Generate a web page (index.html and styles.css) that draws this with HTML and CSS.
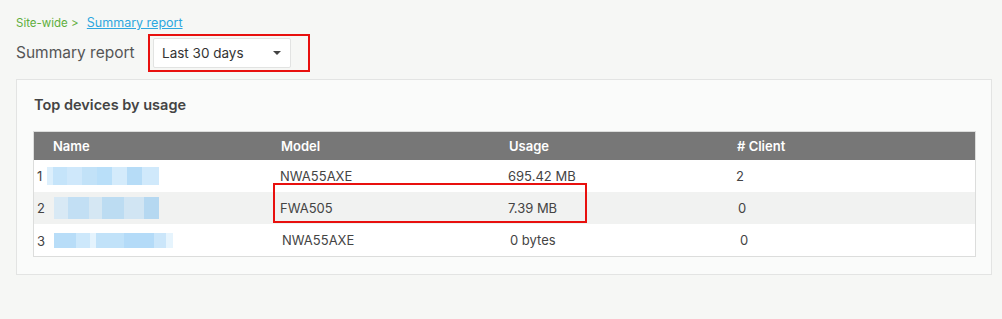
FILE: index.html
```html
<!DOCTYPE html>
<html lang="en">
<head>
    <meta charset="UTF-8">
    <title>Summary report</title>
    <link rel="stylesheet" href="styles.css">
</head>
<body>
    <div class="breadcrumb">
        <span class="crumb-site">Site-wide &gt;</span>
        <a href="#" class="crumb-link">Summary report</a>
    </div>

    <div class="page-head">
        <h2>Summary report</h2>
        <div class="highlight range-box">
            <div class="range-select">
                <span>Last 30 days</span>
                <span class="caret"></span>
            </div>
        </div>
    </div>

    <div class="card">
        <h3>Top devices by usage</h3>
        <div class="table-wrap">
            <table>
                <thead>
                    <tr>
                        <th class="col">Name</th>
                        <th class="col">Model</th>
                        <th class="col">Usage</th>
                        <th># Client</th>
                    </tr>
                </thead>
                <tbody>
                    <tr>
                        <td class="name-cell"><span class="idx">1</span><span class="blur blur-1"></span></td>
                        <td>NWA55AXE</td>
                        <td>695.42 MB</td>
                        <td>2</td>
                    </tr>
                    <tr class="alt">
                        <td class="name-cell"><span class="idx">2</span><span class="blur blur-2"></span></td>
                        <td>FWA505</td>
                        <td>7.39 MB</td>
                        <td class="shift-1">0</td>
                    </tr>
                    <tr>
                        <td class="name-cell"><span class="idx">3</span><span class="blur blur-3"></span></td>
                        <td class="shift-1">NWA55AXE</td>
                        <td class="shift-1">0 bytes</td>
                        <td class="shift-2">0</td>
                    </tr>
                </tbody>
            </table>
            <div class="highlight row-box"></div>
        </div>
    </div>
</body>
</html>
```

FILE: styles.css
```css
body {
    margin: 0;
    padding: 14px 16px 0;
    background-color: #f6f7f5;
    font-family: Inter, "Noto Sans", sans-serif;
    color: #444;
}
.breadcrumb {
    font-size: 11.5px;
    height: 18px;
    line-height: 18px;
}
.crumb-site {
    color: #5eae3c;
}
.crumb-link {
    color: #2ea7e0;
    margin-left: 5px;
    font-size: 12.5px;
}
.page-head {
    display: flex;
    align-items: center;
    height: 41px;
}
.page-head h2 {
    margin: 0;
    font-size: 15.5px;
    font-weight: normal;
    color: #555;
    width: 132px;
}
.highlight {
    border: 2px solid #e8100e;
}
.range-box {
    padding: 2px 17px 2px 3px;
}
.range-select {
    display: flex;
    align-items: center;
    justify-content: space-between;
    width: 120px;
    height: 28px;
    padding: 0 8px;
    background: #fff;
    border: 1px solid #e2e3e2;
    border-radius: 2px;
    font-size: 13.5px;
    color: #333;
}
.caret {
    width: 0;
    height: 0;
    margin-right: 1px;
    border-left: 4px solid transparent;
    border-right: 4px solid transparent;
    border-top: 4px solid #444;
}
.card {
    margin-top: 6px;
    width: 942px;
    height: 161px;
    padding: 16px 16px 17px 16px;
    background: #fafbfa;
    border: 1px solid #e3e4e3;
}
.card h3 {
    margin: 0 0 17px 1px;
    font-size: 14.5px;
    font-weight: 600;
    color: #444;
    line-height: 18px;
}
.table-wrap {
    position: relative;
}
table {
    width: 943px;
    table-layout: fixed;
    border-collapse: collapse;
    border: 1px solid #dcdddc;
    background: #fff;
    font-size: 13px;
}
th {
    background: #777;
    color: #fff;
    text-align: left;
    font-weight: 600;
    height: 28px;
    padding: 0 0 0 19px;
}
th.col {
    width: 209px;
}
td {
    height: 32px;
    padding: 0 0 0 18px;
    color: #444;
}
td.name-cell {
    padding-left: 3px;
}
tr.alt td {
    background: #f1f2f1;
}
td.shift-1 {
    padding-left: 20px;
}
td.shift-2 {
    padding-left: 22px;
}
.idx {
    display: inline-block;
    width: 10px;
    vertical-align: middle;
}
.blur {
    display: inline-block;
    vertical-align: middle;
    height: 18px;
}
.blur-1 {
    width: 112px;
    background: linear-gradient(90deg, #dceffc 0 6px, #c5e4fa 6px 20px, #cfe8fb 20px 35px, #c2e2f8 35px 50px, #b9dff9 50px 65px, #d4ebfb 65px 80px, #b6dcf7 80px 95px, #d0e9fb 95px 112px);
}
.blur-2 {
    width: 105px;
    height: 22px;
    margin-left: 7px;
    background: linear-gradient(90deg, #d8e9f5 0 14px, #c2dff4 14px 35px, #d5e7f3 35px 48px, #bcdcf2 48px 70px, #d1e5f3 70px 90px, #b5d8f1 90px 105px);
}
.blur-3 {
    width: 119px;
    height: 15px;
    margin-left: 7px;
    background: linear-gradient(90deg, #b8ddf8 0 22px, #cde8fb 22px 36px, #e4f3fd 36px 42px, #c1e2f9 42px 70px, #b4dbf8 70px 100px, #cbe6fa 100px 112px, #e6f4fd 112px 119px);
}
.row-box {
    position: absolute;
    left: 240px;
    top: 52px;
    width: 310px;
    height: 36px;
}
```
